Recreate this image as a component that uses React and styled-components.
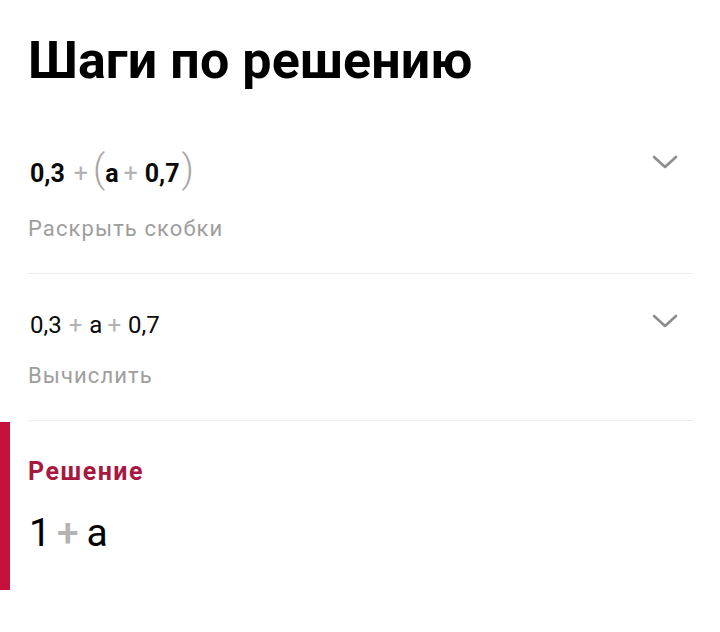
import React from "react";
import styled, { createGlobalStyle } from "styled-components";

const Global = createGlobalStyle`
  html, body { margin: 0; padding: 0; background: #fff; }
  body { font-family: Roboto, "Noto Sans", Arial, sans-serif; color: #000; }
`;

const Page = styled.div`
  display: flex;
  flex-direction: column;
  padding: 31px 27px 0 0;
`;

const Title = styled.h1`
  margin: 0 0 18px 28px;
  font-size: 52px;
  line-height: 60px;
  font-weight: 700;
  letter-spacing: 0.1px;
`;

const Steps = styled.div`
  display: flex;
  flex-direction: column;
  margin-left: 28px;
`;

const Step = styled.div`
  display: flex;
  flex-direction: column;
  gap: 17px;
  padding: 31px 0 30px;
  border-bottom: 1px solid #ececec;
`;

const StepHead = styled.div`
  display: flex;
  align-items: center;
  justify-content: space-between;
`;

const Expr = styled.div`
  display: flex;
  align-items: baseline;
  font-size: ${p => (p.$bold ? 25 : 24)}px;
  line-height: ${p => p.$lh}px;
  height: ${p => p.$lh}px;
  font-weight: ${p => (p.$bold ? 700 : 400)};
  color: #0a0a0a;
  padding-left: 2px;
`;

const Op = styled.span`
  color: #b3b3b3;
  font-weight: ${p => p.$weight || 400};
  margin: 0 ${p => p.$r}px 0 ${p => p.$l}px;
`;

const Paren = styled.span`
  color: #a8a8a8;
  font-weight: 300;
  font-size: 38px;
  margin: 0 ${p => p.$r || 0}px 0 ${p => p.$l || 0}px;
`;

const Hint = styled.div`
  font-size: 22px;
  line-height: 28px;
  letter-spacing: 1.1px;
  color: #9e9e9e;
`;

const Chevron = styled.svg`
  width: 26px;
  height: 14px;
  margin: ${p => p.$mt}px 15px 0 0;
  flex: none;
`;

const Solution = styled.div`
  display: flex;
  flex-direction: column;
  gap: 24px;
  margin-top: 1px;
  border-left: 10px solid #c4103a;
  padding: 36px 0 34px 18px;
`;

const SolutionLabel = styled.div`
  font-size: 25px;
  line-height: 28px;
  font-weight: 700;
  letter-spacing: 1.5px;
  color: #a8173f;
`;

const Answer = styled.div`
  font-size: 39px;
  line-height: 46px;
  color: #000;
  display: flex;
  align-items: baseline;
  padding-left: 1px;
`;

const ChevronIcon = ({ mt }) => (
  <Chevron $mt={mt} viewBox="0 0 26 14" fill="none">
    <path d="M2 2 L13 12 L24 2" stroke="#8c8c8c" strokeWidth="2.6" strokeLinecap="round" strokeLinejoin="round" />
  </Chevron>
);

export default function App() {
  return (
    <>
      <Global />
      <Page>
        <Title>Шаги по решению</Title>
        <Steps>
          <Step>
            <StepHead>
              <Expr $lh={58} $bold>
                <span>0,3</span>
                <Op $l={9} $r={5}>+</Op>
                <Paren $r={0}>(</Paren>
                <span>a</span>
                <Op $l={5} $r={7}>+</Op>
                <span>0,7</span>
                <Paren $l={2}>)</Paren>
              </Expr>
              <ChevronIcon mt={-14} />
            </StepHead>
            <Hint>Раскрыть скобки</Hint>
          </Step>
          <Step>
            <StepHead>
              <Expr $lh={40}>
                <span>0,3</span>
                <Op $l={7} $r={7}>+</Op>
                <span>a</span>
                <Op $l={5} $r={7}>+</Op>
                <span>0,7</span>
              </Expr>
              <ChevronIcon mt={-8} />
            </StepHead>
            <Hint>Вычислить</Hint>
          </Step>
        </Steps>
        <Solution>
          <SolutionLabel>Решение</SolutionLabel>
          <Answer>
            <span>1</span>
            <Op $l={6} $r={8} $weight={500}>+</Op>
            <span>a</span>
          </Answer>
        </Solution>
      </Page>
    </>
  );
}
